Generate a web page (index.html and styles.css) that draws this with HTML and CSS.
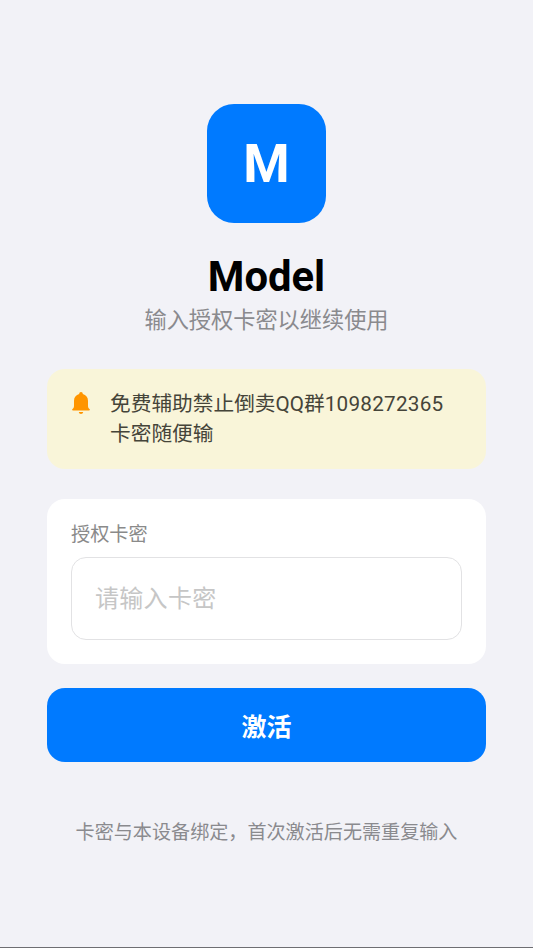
FILE: index.html
```html
<!DOCTYPE html>
<html lang="zh-CN">
<head>
<meta charset="utf-8">
<title>Model</title>
<link rel="stylesheet" href="styles.css">
</head>
<body>
<main class="screen">
  <div class="logo">M</div>
  <h1 class="title">Model</h1>
  <p class="subtitle">输入授权卡密以继续使用</p>
  <section class="notice">
    <svg class="bell" viewBox="0 0 18 22"><path d="M9 0C7.9 0 7.2.8 7.2 2C4 2.8 2 5.4 2 8.700v5.100C2 15.600 1.400 16.400.5 17C-.1 17.500.1 18.500 1 18.500h16c.9 0 1.100-1 .5-1.500c-.9-.6-1.500-1.400-1.500-3.200V8.700C16 5.400 14 2.800 10.800 2C10.800.8 10.100 0 9 0zM6.800 20h4.400c-.2 1.200-1 1.900-2.200 1.900S7 21.200 6.800 20z"/></svg>
    <p class="notice-text">免费辅助禁止倒卖QQ群<span class="number">1098272365</span><br>卡密随便输</p>
  </section>
  <section class="card">
    <label class="label" for="key">授权卡密</label>
    <input class="field" id="key" type="text" placeholder="请输入卡密">
  </section>
  <button class="activate" type="button">激活</button>
  <p class="footnote">卡密与本设备绑定，首次激活后无需重复输入</p>
</main>
</body>
</html>
```
FILE: styles.css
```css
* { box-sizing: border-box; margin: 0; }
body {
  background: #f2f2f7;
  font-family: Roboto, "Noto Sans CJK SC", sans-serif;
}
.screen {
  display: flex;
  flex-direction: column;
  align-items: center;
  height: 948px;
  padding: 104px 47px 0;
  border-bottom: 1px solid #6e6e72;
}
.logo {
  display: flex;
  align-items: center;
  justify-content: center;
  width: 119px;
  height: 119px;
  border-radius: 27px;
  background: #007aff;
  color: #fff;
  font-size: 53px;
  font-weight: 700;
}
.title {
  margin-top: 29px;
  font-size: 41.8px;
  line-height: 49px;
  font-weight: 700;
  color: #000;
}
.subtitle {
  margin-top: 3px;
  font-size: 22.2px;
  line-height: 32px;
  color: #8a8a8e;
}
.notice {
  display: flex;
  width: 439px;
  height: 100px;
  margin-top: 33px;
  padding: 21px 24px;
  border-radius: 18px;
  background: #f9f5d9;
}
.bell { width: 18px; height: 22px; margin: 2px 4px 0 1px; fill: #ff9500; }
.notice-text {
  margin-left: 16px;
  font-size: 20.7px;
  line-height: 29.5px;
  color: #454439;
  white-space: nowrap;
}
.number { letter-spacing: 0.25px; }
.card {
  width: 439px;
  height: 165px;
  margin-top: 30px;
  padding: 22px 24px 0;
  border-radius: 18px;
  background: #fff;
}
.label {
  display: block;
  font-size: 19.2px;
  line-height: 28px;
  color: #8a8a8a;
}
.field {
  display: block;
  width: 391px;
  height: 83px;
  margin-top: 8px;
  padding: 0 23px;
  border: 1.5px solid #e2e2e4;
  border-radius: 15px;
  background: #fff;
  font-family: inherit;
  font-size: 24px;
  letter-spacing: 0.3px;
}
.field::placeholder { color: #c6c6c6; }
.activate {
  width: 439px;
  height: 74px;
  margin-top: 24px;
  padding: 0 0 1px;
  border: 0;
  border-radius: 18px;
  background: #007aff;
  color: #fff;
  font-family: inherit;
  font-size: 25px;
  font-weight: 700;
}
.footnote {
  margin-top: 57px;
  font-size: 19.1px;
  line-height: 28px;
  color: #8a8a8e;
  white-space: nowrap;
}
```
